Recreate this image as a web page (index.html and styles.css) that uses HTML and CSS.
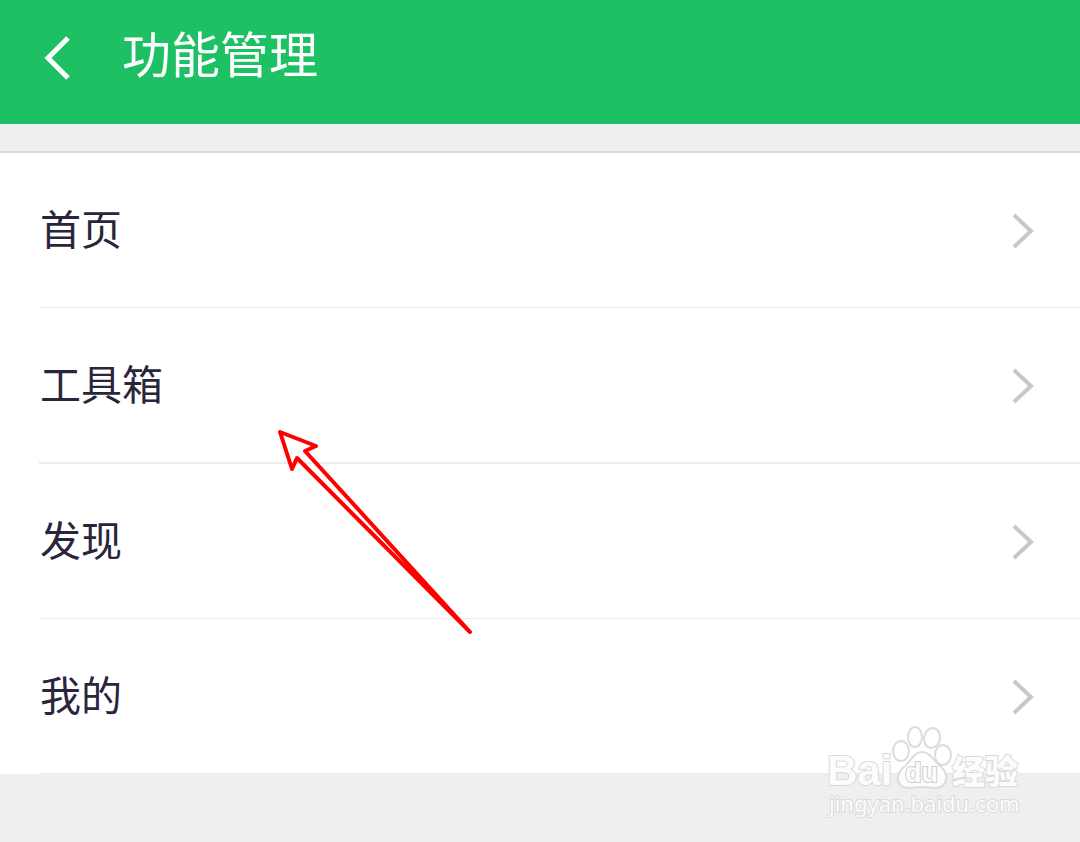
FILE: index.html
```html
<!DOCTYPE html>
<html lang="zh-CN">
<head>
  <meta charset="UTF-8">
  <meta name="viewport" content="width=device-width, initial-scale=1.0">
  <title>功能管理</title>
  <link rel="stylesheet" href="styles.css">
</head>
<body>

<header class="topbar">
  <button class="back" type="button" aria-label="返回">
    <svg width="28" height="46" viewBox="0 0 28 46"><path d="M24 3 L4 23 L24 43"/></svg>
  </button>
  <h1>功能管理</h1>
</header>

<main class="content">
  <nav class="menu">
    <a class="row" href="#home">
      <span class="label">首页</span>
      <svg class="chevron" width="24" height="38" viewBox="0 0 24 38"><path d="M2 4 L19 20 L2 36"/></svg>
    </a>
    <a class="row row-thick" href="#tools">
      <span class="label">工具箱</span>
      <svg class="chevron" width="24" height="38" viewBox="0 0 24 38"><path d="M2 4 L19 20 L2 36"/></svg>
    </a>
    <a class="row" href="#discover">
      <span class="label">发现</span>
      <svg class="chevron" width="24" height="38" viewBox="0 0 24 38"><path d="M2 4 L19 20 L2 36"/></svg>
    </a>
    <a class="row" href="#mine">
      <span class="label">我的</span>
      <svg class="chevron" width="24" height="38" viewBox="0 0 24 38"><path d="M2 4 L19 20 L2 36"/></svg>
    </a>
  </nav>
</main>

<!-- red pointer over the list -->
<svg class="pointer" width="200" height="210" viewBox="0 0 200 210" aria-hidden="true">
  <path d="M5 7 L41 21 L30 26 L195 207 L22 33 L17 44 Z"/>
</svg>

<!-- watermark -->
<svg class="watermark" width="210" height="110" viewBox="0 0 210 110" role="img" aria-label="Baidu 经验">
  <g class="paw">
    <ellipse cx="81" cy="31" rx="8" ry="10"/>
    <ellipse cx="95" cy="17" rx="7" ry="10"/>
    <ellipse cx="112" cy="18" rx="8" ry="10" transform="rotate(12 112 18)"/>
    <ellipse cx="123" cy="35" rx="8" ry="10"/>
    <path d="M102 32 C94 32 91 41 85 46 C79 51 76 57 79 63 C84 71 94 67 102 67 C110 67 121 71 125 63 C128 57 126 51 120 46 C113 40 110 32 102 32 Z"/>
  </g>
  <text class="mark mark-bai" x="7" y="65">Bai</text>
  <text class="mark mark-du" x="85" y="62">du</text>
  <text class="mark mark-cn" x="132" y="64">经验</text>
  <text class="mark mark-url" x="9" y="92">jingyan.baidu.com</text>
</svg>

</body>
</html>
```
FILE: styles.css
```css
* {
  box-sizing: border-box;
}

body {
  margin: 0;
  position: relative;
  min-height: 100vh;
  background: #efefef;
  font-family: "Noto Sans CJK SC", sans-serif;
}

.topbar {
  display: flex;
  align-items: center;
  gap: 50px;
  height: 124px;
  padding: 0 40px 8px;
  background: #1dc164;
  color: #fff;
}

.topbar h1 {
  margin: 0;
  padding-bottom: 12px;
  font-size: 49px;
  font-weight: 400;
  line-height: 72px;
}

.back {
  display: flex;
  padding: 0;
  border: 0;
  background: none;
  cursor: pointer;
}

.back svg {
  fill: none;
  stroke: #fff;
  stroke-width: 5;
  margin-left: 4px;
}

.content {
  padding-top: 27px;
}

.menu {
  border-top: 2px solid #dadada;
  padding-left: 39px;
  background: #fff;
}

.row {
  display: flex;
  align-items: center;
  justify-content: space-between;
  min-height: 155px;
  padding-right: 44px;
  border-bottom: 1px solid #ececec;
  color: #29263b;
  font-size: 41px;
  line-height: 60px;
  text-decoration: none;
}

.row-thick {
  min-height: 156px;
  border-bottom-width: 2px;
}

.label {
  padding: 0 0 7px 1px;
}

.chevron {
  fill: none;
  stroke: #c8c8c8;
  stroke-width: 4;
}

.pointer {
  position: absolute;
  top: 425px;
  left: 275px;
  fill: none;
  stroke: #f00;
  stroke-width: 4;
  stroke-linecap: round;
  stroke-linejoin: round;
  pointer-events: none;
}

.watermark {
  position: absolute;
  top: 720px;
  right: 50px;
  pointer-events: none;
}

.paw {
  fill: #fff;
  fill-opacity: 0.8;
  stroke: #dcdcdc;
  stroke-width: 2;
}

.mark {
  fill: #fcfcfc;
  stroke: #dadada;
  stroke-width: 2;
  paint-order: stroke;
}

.mark-bai {
  font: 700 42px "Liberation Sans", sans-serif;
}

.mark-du {
  font: 700 27px "Liberation Sans", sans-serif;
  stroke: #ccc;
}

.mark-cn {
  font: 900 33px "Noto Sans CJK SC", sans-serif;
}

.mark-url {
  font: 400 22px "Noto Sans", sans-serif;
}
```
